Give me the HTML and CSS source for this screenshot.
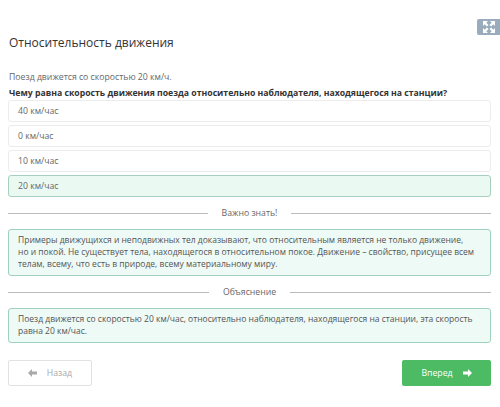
FILE: index.html
```html
<!DOCTYPE html>
<html lang="ru">
<head>
<meta charset="utf-8">
<link rel="stylesheet" href="styles.css">
</head>
<body>
<div class="page">
  <div class="topbar">
    <div class="expand">
      <svg width="14" height="14" viewBox="0 0 14 14">
        <g fill="#fff">
          <path d="M1 1h5L4.3 2.7 6.5 4.9 4.9 6.5 2.7 4.3 1 6z"/>
          <path d="M13 1v5l-1.7-1.7-2.2 2.2-1.6-1.6 2.2-2.2L8 1z"/>
          <path d="M1 13V8l1.7 1.7 2.2-2.2 1.6 1.6-2.2 2.2L6 13z"/>
          <path d="M13 13H8l1.7-1.7-2.2-2.2 1.6-1.6 2.2 2.2L13 8z"/>
        </g>
      </svg>
    </div>
  </div>
  <h1 class="title">Относительность движения</h1>
  <p class="lead">Поезд движется со скоростью 20 км/ч.</p>
  <p class="question">Чему равна скорость движения поезда относительно наблюдателя, находящегося на станции?</p>
  <div class="options">
    <div class="option">40 км/час</div>
    <div class="option">0 км/час</div>
    <div class="option">10 км/час</div>
    <div class="option correct">20 км/час</div>
  </div>
  <div class="divider"><span>Важно знать!</span></div>
  <div class="note">Примеры движущихся и неподвижных тел доказывают, что относительным является не только движение, но&nbsp;и покой. Не существует тела, находящегося в относительном покое. Движение – свойство, присущее всем телам, всему, что есть в природе, всему материальному миру.</div>
  <div class="divider"><span>Объяснение</span></div>
  <div class="note">Поезд движется со скоростью 20 км/час, относительно наблюдателя, находящегося на станции, эта скорость равна 20 км/час.</div>
  <div class="nav">
    <button class="btn back">
      <svg width="9" height="8" viewBox="0 0 9 8"><path d="M4 0L0 4l4 4V5.5h5v-3H4z" fill="#aaa"/></svg>
      <span>Назад</span>
    </button>
    <button class="btn next">
      <span>Вперед</span>
      <svg width="9" height="8" viewBox="0 0 9 8"><path d="M5 0l4 4-4 4V5.5H0v-3h5z" fill="#fff"/></svg>
    </button>
  </div>
</div>
</body>
</html>
```

FILE: styles.css
```css
* { box-sizing: border-box; }
html, body { margin: 0; padding: 0; background: #fff; }
body { font-family: "Open Sans", "Noto Sans", sans-serif; color: #333; }
.page { padding: 0 9px 0 8px; width: 500px; }
.topbar { display: flex; justify-content: flex-end; height: 35px; padding-top: 19px; margin-right: -9px; }
.expand { width: 23px; height: 16px; background: #9aacbc; border-radius: 2px 0 0 2px; display: flex; align-items: center; justify-content: center; }
.title { font-size: 12px; font-weight: 400; margin: 0 0 0 1px; line-height: 16px; color: #333; }
.lead { font-size: 8.7px; color: #666; margin: 20px 0 0 1px; line-height: 12px; }
.question { font-size: 8.7px; font-weight: 700; margin: 4px 0 0 1px; line-height: 12px; color: #333; }
.options { display: flex; flex-direction: column; gap: 3px; margin-top: 1px; }
.option { height: 22px; border: 1px solid #ececec; border-radius: 3px; font-size: 8.7px; color: #666; padding: 0 9px; display: flex; align-items: center; }
.option.correct { background: #ebf9f3; border-color: #a6cfbd; }
.divider { display: flex; align-items: center; gap: 14px; margin: 10px 0 10px; font-size: 8.7px; color: #666; }
.divider::before, .divider::after { content: ""; flex: 1; border-top: 1px solid #bbb; }
.note { border: 1px solid #9fd2bc; background: #eefaf5; border-radius: 3px; font-size: 8.5px; line-height: 12px; color: #555; padding: 4px 13px 5px 9px; }
.nav { display: flex; justify-content: space-between; margin-top: 17px; }
.btn { height: 26px; border-radius: 2px; font-family: inherit; font-size: 8.7px; display: flex; align-items: center; justify-content: center; gap: 10px; padding: 0; }
.back { width: 84px; background: #fff; border: 1px solid #e2e2e2; color: #aaa; }
.next { width: 89px; background: #4cbb64; border: none; color: #fff; }
```
